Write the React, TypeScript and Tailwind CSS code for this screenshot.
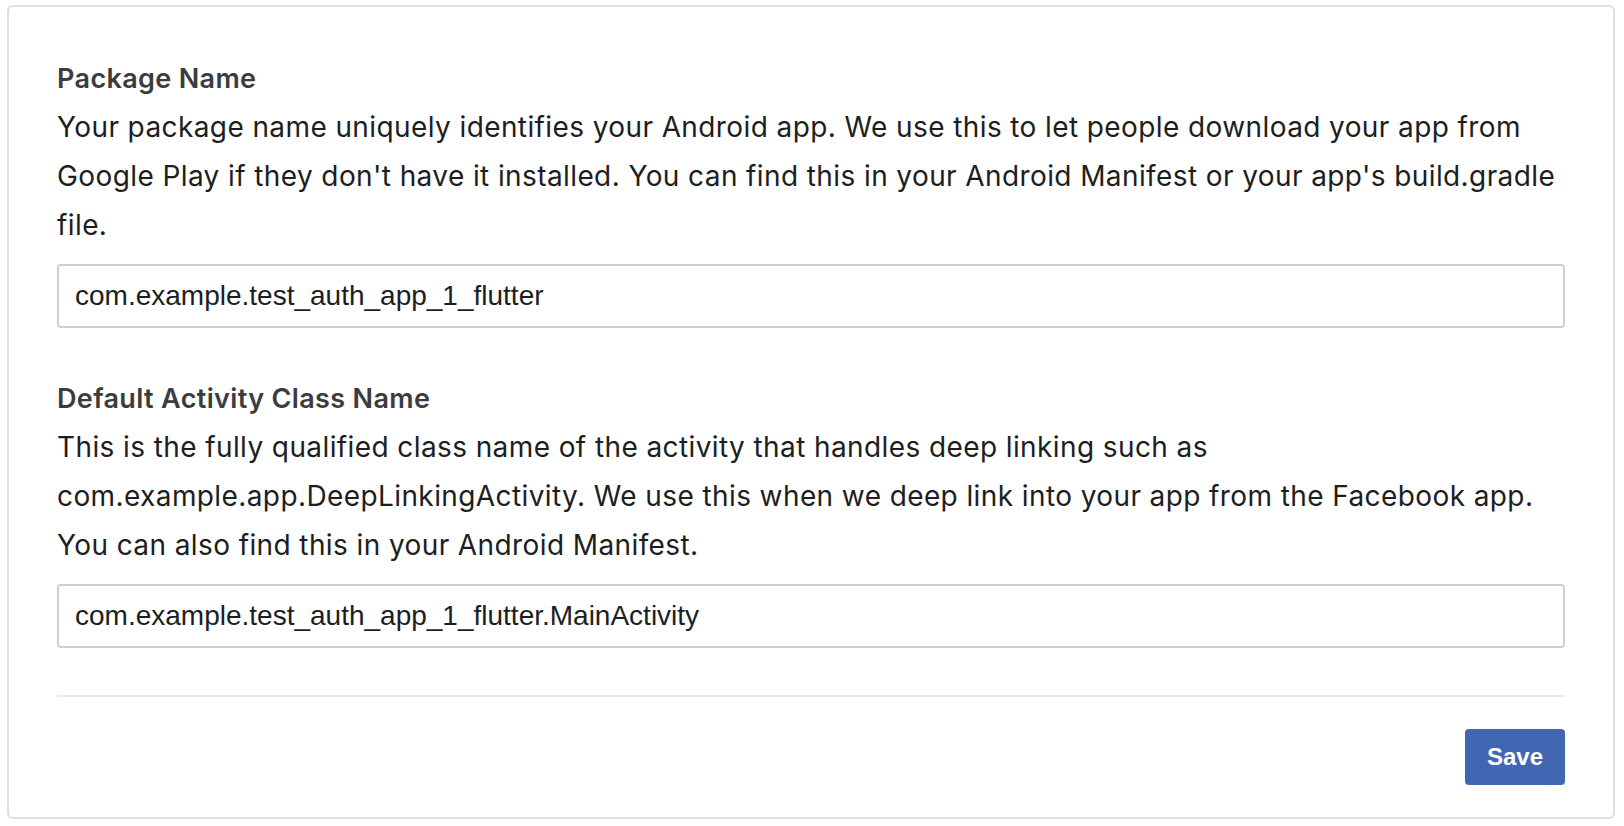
import { useState } from "react";

const body = "font-['Inter',sans-serif]";

function Field({
  label,
  help,
  value,
  onChange,
}: {
  label: string;
  help: string;
  value: string;
  onChange: (v: string) => void;
}) {
  return (
    <div>
      <div className={`${body} text-[27px] leading-[49px] font-semibold tracking-[0.35px] text-[#3b3c3e]`}>
        {label}
      </div>
      <p className={`${body} text-[28px] leading-[49px] text-[#1c1e21] tracking-[0.4px]`}>
        {help}
      </p>
      <input
        value={value}
        onChange={(e) => onChange(e.target.value)}
        className="mt-[14px] block w-full h-[64px] border-2 border-[#ccd0d5] rounded-[4px] px-[16px] text-[28px] text-[#1c1e21] font-['Liberation_Sans',Arial,sans-serif] focus:outline-none"
      />
    </div>
  );
}

export default function App() {
  const [pkg, setPkg] = useState("com.example.test_auth_app_1_flutter");
  const [cls, setCls] = useState("com.example.test_auth_app_1_flutter.MainActivity");

  return (
    <div className="min-h-[826px] bg-white pl-[7px] pr-[9px] pt-[5px]">
      <div className="border-2 border-[#dddfe2] rounded-[6px] px-12 pt-[47px] pb-[32px]">
        <Field
          label="Package Name"
          help="Your package name uniquely identifies your Android app. We use this to let people download your app from Google Play if they don't have it installed. You can find this in your Android Manifest or your app's build.gradle file."
          value={pkg}
          onChange={setPkg}
        />
        <div className="mt-[46px]">
          <Field
            label="Default Activity Class Name"
            help="This is the fully qualified class name of the activity that handles deep linking such as com.example.app.DeepLinkingActivity. We use this when we deep link into your app from the Facebook app. You can also find this in your Android Manifest."
            value={cls}
            onChange={setCls}
          />
        </div>

        {/* Footer */}
        <div className="mt-[47px] border-t-2 border-[#e9eaed] pt-[32px] flex justify-end">
          <button className="h-[56px] px-[22px] rounded-[4px] bg-[#4267b2] text-white text-[24px] font-bold font-['Liberation_Sans',Arial,sans-serif] hover:bg-[#365899]">
            Save
          </button>
        </div>
      </div>
    </div>
  );
}
